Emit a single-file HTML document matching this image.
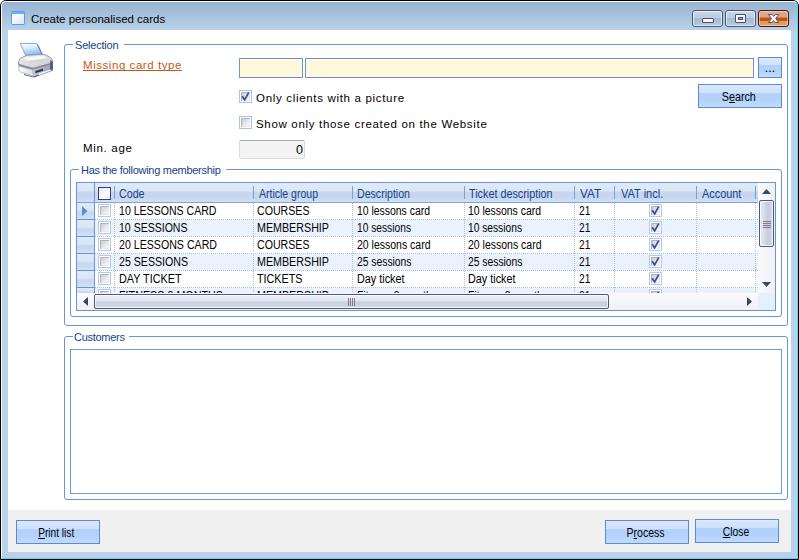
<!DOCTYPE html>
<html><head><meta charset="utf-8">
<style>
*{box-sizing:border-box;margin:0;padding:0}
html,body{width:799px;height:560px;overflow:hidden;background:#fff}
body{font-family:"Liberation Sans",sans-serif;font-size:11px;color:#000;position:relative}
.abs{position:absolute}
#win{position:absolute;left:0;top:0;width:799px;height:560px;background:#b9d1ea;border:1px solid #000;border-radius:6px 6px 0 0;overflow:hidden}
#tb{position:absolute;left:0;top:0;width:797px;height:29px;background:linear-gradient(#99b4d1 0%,#99b4d1 6%,#b9d1ea 100%)}
#hl{position:absolute;left:0;top:0;width:797px;height:558px;border:1px solid #fdfeff;border-right-color:#5bd5f7;border-bottom-color:#5bd5f7;border-radius:5px 5px 0 0}
#content{position:absolute;left:7px;top:29px;width:783px;height:522px;background:#fff}
#foot{position:absolute;left:0;top:480px;width:783px;height:42px;background:#f0f0f0}
.title{position:absolute;left:30px;top:12px;font-size:11.5px;color:#000;white-space:nowrap}
.gb{position:absolute;border:1px solid #6695d8;border-radius:3px}
.gbc{position:absolute;background:#fff;color:#15428b;font-size:11px;letter-spacing:-.28px;padding:0 0 0 2px;white-space:nowrap;line-height:13px}
.t{position:absolute;white-space:nowrap;line-height:13px}
.v{font-size:11.5px;letter-spacing:.68px}
.btn{position:absolute;border:1px solid #5b8bd6;background:linear-gradient(#e2edfd 0%,#d8e6fc 6%,#cfe1fc 36%,#b2d1fb 38%,#b4d3fb 70%,#c2dbfc 100%);text-align:center;font-size:12.5px;line-height:24px;padding-right:3px;white-space:nowrap}
.btn span{display:inline-block;transform-origin:50% 50%}
.in{position:absolute;border:1px solid #6795d8;background:#fff8dc}
.cb{position:absolute;width:13px;height:13px;border:1px solid #a9c4ea;background:linear-gradient(135deg,#bcc1c8,#f4f5f6 75%);box-shadow:inset 0 0 0 1px #fff,inset 2px 2px 0 0 #b0b6be,inset -2px -2px 0 0 #e6e8eb}
.cb svg{position:absolute;left:-1px;top:-1px}

.gh{position:absolute;background:linear-gradient(#e1eaf7 0%,#dbe6f5 42%,#c5d6ee 48%,#c5d6ee 72%,#d2e0f3 100%)}
.ind{position:absolute;background:linear-gradient(#dfe9f7 0%,#dbe6f5 45%,#c8d8ef 55%,#c8d8ef 70%,#d5e2f4 100%)}
.hd{position:absolute;height:1px;background:repeating-linear-gradient(90deg,#a9c0e6 0 1px,transparent 1px 2px)}
.vd{position:absolute;width:1px;background:repeating-linear-gradient(180deg,#a9c0e6 0 1px,transparent 1px 2px)}
.ht{color:#15428b;font-size:12.5px;transform-origin:0 50%;line-height:15px}
.rt{font-size:12.5px;transform-origin:0 50%;line-height:15px}
.rcb{position:absolute;width:13px;height:13px;border:1px solid #b5c9e8;background:linear-gradient(135deg,#bcc1c8,#f4f5f6 75%);box-shadow:inset 0 0 0 1px #fff,inset 2px 2px 0 0 #b0b6be,inset -2px -2px 0 0 #e6e8eb}
.rcb svg{position:absolute;left:-1px;top:-1px}

.cbtn{position:absolute;border:1px solid #4a5578;border-radius:3px;background:linear-gradient(#c9d8ea 0%,#bccde3 45%,#a5bcd8 50%,#b3c8e0 100%);box-shadow:inset 0 0 0 1px rgba(255,255,255,.65)}
.cbtn i{position:absolute;border:1px solid #4a4f73;background:#f4f6fa;border-radius:1px}
.cbtn b{position:absolute;border:1px solid #4a4f73;background:#8fb0dc}
.cbtn.cx{border-color:#4b1220;background:linear-gradient(#e0ab90 0%,#dba388 42%,#c5500f 45%,#c5500f 65%,#d99a5e 68%,#dba868 100%);box-shadow:inset 0 0 0 1px rgba(255,225,200,.6)}
</style></head><body>
<div id="win">
 <div id="tb"></div>
 <div id="hl"></div>
 <div class="title">Create personalised cards</div>
 <div id="content">
  <div id="foot"></div>
 </div>
</div>

<div id="L" style="position:absolute;left:0;top:0;width:799px;height:560px">

 <!-- title icon -->
 <svg class="abs" style="left:11px;top:11px" width="14" height="14" viewBox="0 0 15 15">
  <defs><linearGradient id="wi" x1="0" y1="0" x2="1" y2="1"><stop offset="0" stop-color="#ffffff"/><stop offset=".5" stop-color="#f2f6fd"/><stop offset="1" stop-color="#d4e3fa"/></linearGradient></defs>
  <rect x=".5" y=".5" width="14" height="14" rx="1.2" fill="url(#wi)" stroke="#4398ea"/>
  <rect x="1" y="1" width="13" height="2.2" fill="#69b0f3"/>
 </svg>
 <!-- caption buttons -->
 <div class="cbtn" style="left:692px;top:10px;width:31px;height:17px"><i style="left:9px;top:7px;width:12px;height:5px"></i></div>
 <div class="cbtn" style="left:725px;top:10px;width:31px;height:17px"><i style="left:9px;top:3px;width:11px;height:9px"></i><b style="left:12px;top:6px;width:5px;height:3px"></b></div>
 <div class="cbtn cx" style="left:758px;top:10px;width:31px;height:17px">
  <svg class="abs" style="left:8px;top:2px" width="14" height="11" viewBox="0 0 14 11"><path transform="translate(0.3 0) scale(0.9 1)" d="M1.2 1.5 L5.2 1.5 L7 3.4 L8.8 1.5 L12.8 1.5 L9.2 5.5 L12.8 9.5 L8.8 9.5 L7 7.6 L5.2 9.5 L1.2 9.5 L4.8 5.5 Z" fill="#fff" stroke="#4a4f73" stroke-width="1" stroke-linejoin="round"/></svg>
 </div>
 <!-- printer icon -->
 <svg class="abs" style="left:12px;top:38px" width="48" height="42" viewBox="12 38 48 42">
  <defs>
   <linearGradient id="pp" x1="0" y1="0" x2=".35" y2="1"><stop offset="0" stop-color="#ffffff"/><stop offset=".4" stop-color="#e3effd"/><stop offset="1" stop-color="#86bef6"/></linearGradient>
   <linearGradient id="pt" x1="0" y1="0" x2="1" y2="1"><stop offset="0" stop-color="#eff0ef"/><stop offset="1" stop-color="#c9cccc"/></linearGradient>
   <linearGradient id="pl" x1="0" y1="0" x2="1" y2="0"><stop offset="0" stop-color="#fbfbfb"/><stop offset="1" stop-color="#dcdfdf"/></linearGradient>
   <linearGradient id="pr" x1="0" y1="0" x2="1" y2="0"><stop offset="0" stop-color="#c3c7c4"/><stop offset="1" stop-color="#989db0"/></linearGradient>
  </defs>
  <!-- shadow -->
  <path d="M24 74 L33 76.6 L47 71 L52.8 66 L52.8 70.4 L34 77.6 L24 75 Z" fill="#2f3a68" opacity=".85"/>
  <!-- paper -->
  <path d="M20.3 43.4 L36.6 43.4 L41.8 54.2 L25.6 55.4 Z" fill="url(#pp)" stroke="#7f8aa8" stroke-width=".8"/>
  <path d="M36.8 43.6 L41.8 54 L43.4 55.4 L38.4 45 Z" fill="#4d567e" opacity=".8"/>
  <!-- body top -->
  <path d="M18.6 61.5 Q18.6 58.5 23.5 56.6 L27 55.4 L42 54.2 L46.5 55.2 Q52.6 58.2 52.6 61.2 L52.6 63 L33 68.4 L18.6 64.5 Z" fill="url(#pt)" stroke="#8f93a2" stroke-width=".9"/>
  <path d="M23.5 57.8 L44 55.8 L47.5 58.2 L29 60.8 Z" fill="#fbfcfc" opacity=".9"/>
  <path d="M29 60.8 L47.5 58.2 L49 60 L31 63 Z" fill="#d4d7d6" opacity=".9"/>
  <!-- mid stripe -->
  <path d="M18.6 64 L33 68 L52.6 62.6 L52.6 64.8 L33 70.2 L18.6 66.2 Z" fill="#857d96" opacity=".85"/>
  <!-- left face -->
  <path d="M18.8 66 L33 70 L33 76 L20.5 72 Q18.8 71 18.8 69.5 Z" fill="url(#pl)" stroke="#9599a8" stroke-width=".6"/>
  <!-- right face -->
  <path d="M33 70 L52.6 64.6 L52.6 68.5 Q52.6 69.8 51 70.5 L33 76 Z" fill="url(#pr)"/>
  <path d="M50.2 60 L52.8 62 L52.8 69 L50.2 70.6 Z" fill="#3f4b7c" opacity=".9"/>
  <!-- slot -->
  <path d="M35.3 71 L43 68.6 L43 70.8 L35.3 73.2 Z" fill="#273363"/>
  <!-- out tray -->
  <path d="M37.5 73.4 L49.8 69.2 L51.4 70.8 L39.5 75.2 Z" fill="#f5f7f9" stroke="#8d93aa" stroke-width=".5"/>
 </svg>

 <!-- Selection groupbox -->
 <div class="gb" style="left:64px;top:44px;width:724px;height:282px"></div>
 <div class="gbc" style="left:73px;top:39px;width:51px;padding-left:2px;letter-spacing:-.2px">Selection</div>

 <div class="t v" style="left:83px;top:59px;height:12px;overflow:hidden;color:#c4571a;text-decoration:underline;text-decoration-skip-ink:none;letter-spacing:.55px">Missing card type</div>
 <div class="in" style="left:239px;top:58px;width:64px;height:20px"></div>
 <div class="in" style="left:305px;top:58px;width:449px;height:20px"></div>
 <div class="btn" style="left:758px;top:57px;width:24px;height:21px;line-height:21px;padding-right:0;letter-spacing:0">...</div>

 <div class="cb" style="left:239px;top:90px"><svg width="13" height="13" viewBox="0 0 13 13"><path d="M3.2 6.3 L5.6 9.8 L9.7 2.6" fill="none" stroke="#3a4a9c" stroke-width="1.7"/></svg></div>
 <div class="t v" style="left:256px;top:92px">Only clients with a picture</div>
 <div class="btn" style="left:698px;top:84px;width:84px;height:24px"><span style="transform:scaleX(.858)">S<u>e</u>arch</span></div>

 <div class="cb" style="left:239px;top:116px"></div>
 <div class="t v" style="left:256px;top:118px">Show only those created on the Website</div>

 <div class="t v" style="left:83px;top:142px">Min. age</div>
 <div class="abs" style="left:239px;top:140px;width:66px;height:19px;border:1px solid #d3dde9;border-top-color:#a5adad;border-radius:2px;background:#f4f4f4;text-align:right;padding-right:1px;line-height:18px;font-size:12.5px;transform-origin:100% 50%">0</div>

 <!-- membership groupbox -->
 <div class="gb" style="left:70px;top:169px;width:712px;height:148px"></div>
 <div class="gbc" style="left:79px;top:164px;width:147px">Has the following membership</div>

 <div id="grid" class="abs" style="left:76px;top:182px;width:700px;height:129px;border:1px solid #6695d8;background:#fff;overflow:hidden">
  <div class="gh" style="left:0;top:0;width:681px;height:19px"></div>
  <div class="abs" style="left:0;top:19px;width:681px;height:1px;background:#7fa3dc"></div>
  <div class="abs" style="left:17px;top:0;width:1px;height:110px;background:#6695d8"></div>
  <div class="ind" style="left:0;top:20px;width:17px;height:16px"></div>
  <div class="abs" style="left:0;top:36px;width:17px;height:1px;background:#6695d8"></div>
  <div class="ind" style="left:0;top:37px;width:17px;height:16px"></div>
  <div class="abs" style="left:0;top:53px;width:17px;height:1px;background:#6695d8"></div>
  <div class="ind" style="left:0;top:54px;width:17px;height:16px"></div>
  <div class="abs" style="left:0;top:70px;width:17px;height:1px;background:#6695d8"></div>
  <div class="ind" style="left:0;top:71px;width:17px;height:16px"></div>
  <div class="abs" style="left:0;top:87px;width:17px;height:1px;background:#6695d8"></div>
  <div class="ind" style="left:0;top:88px;width:17px;height:16px"></div>
  <div class="abs" style="left:0;top:104px;width:17px;height:1px;background:#6695d8"></div>
  <div class="ind" style="left:0;top:105px;width:17px;height:6px"></div>
  <div class="abs" style="left:18px;top:37px;width:663px;height:16px;background:#eaf2fd"></div>
  <div class="abs" style="left:18px;top:71px;width:663px;height:16px;background:#eaf2fd"></div>
  <div class="abs" style="left:18px;top:105px;width:663px;height:16px;background:#eaf2fd"></div>
  <div class="hd" style="left:18px;top:36px;width:663px"></div>
  <div class="hd" style="left:18px;top:53px;width:663px"></div>
  <div class="hd" style="left:18px;top:70px;width:663px"></div>
  <div class="hd" style="left:18px;top:87px;width:663px"></div>
  <div class="hd" style="left:18px;top:104px;width:663px"></div>
  <div class="vd" style="left:37px;top:20px;height:90px"></div>
  <div class="abs" style="left:37px;top:3px;width:1px;height:13px;background:#7da0d8"></div>
  <div class="vd" style="left:176px;top:20px;height:90px"></div>
  <div class="abs" style="left:176px;top:3px;width:1px;height:13px;background:#7da0d8"></div>
  <div class="vd" style="left:275px;top:20px;height:90px"></div>
  <div class="abs" style="left:275px;top:3px;width:1px;height:13px;background:#7da0d8"></div>
  <div class="vd" style="left:387px;top:20px;height:90px"></div>
  <div class="abs" style="left:387px;top:3px;width:1px;height:13px;background:#7da0d8"></div>
  <div class="vd" style="left:497px;top:20px;height:90px"></div>
  <div class="abs" style="left:497px;top:3px;width:1px;height:13px;background:#7da0d8"></div>
  <div class="vd" style="left:537px;top:20px;height:90px"></div>
  <div class="abs" style="left:537px;top:3px;width:1px;height:13px;background:#7da0d8"></div>
  <div class="vd" style="left:619px;top:20px;height:90px"></div>
  <div class="abs" style="left:619px;top:3px;width:1px;height:13px;background:#7da0d8"></div>
  <div class="vd" style="left:678px;top:20px;height:90px"></div>
  <div class="abs" style="left:678px;top:3px;width:1px;height:13px;background:#7da0d8"></div>
  <div class="abs" style="left:21px;top:4px;width:13px;height:13px;border:1px solid #353b85;background:linear-gradient(135deg,#dfe6f2,#fdfdfe 60%,#e9eef6)"></div>
  <div class="t ht" style="left:41.599999999999994px;top:4.0px;transform:scaleX(0.8531)">Code</div>
  <div class="t ht" style="left:181.5px;top:4.0px;transform:scaleX(0.8406)">Article group</div>
  <div class="t ht" style="left:280px;top:4.0px;transform:scaleX(0.8476)">Description</div>
  <div class="t ht" style="left:392px;top:4.0px;transform:scaleX(0.8636)">Ticket description</div>
  <div class="t ht" style="left:503px;top:4.0px;transform:scaleX(0.939)">VAT</div>
  <div class="t ht" style="left:543.8px;top:4.0px;transform:scaleX(0.8803)">VAT incl.</div>
  <div class="t ht" style="left:625px;top:4.0px;transform:scaleX(0.87)">Account</div>
  <svg class="abs" style="left:5px;top:23px" width="6" height="10" viewBox="0 0 6 10"><path d="M0 0 L5.5 5 L0 10 Z" fill="#5b8bd5"/></svg>
  <div class="rcb" style="left:21px;top:21px"></div>
  <div class="rcb" style="left:572px;top:21px"><svg width="13" height="13" viewBox="0 0 13 13"><path d="M3.2 6.3 L5.6 9.8 L9.7 2.6" fill="none" stroke="#3a4a9c" stroke-width="1.7"/></svg></div>
  <div class="t rt" style="left:41.599999999999994px;top:21.0px;transform:scaleX(0.8454)">10 LESSONS CARD</div>
  <div class="t rt" style="left:180.3px;top:21.0px;transform:scaleX(0.8491)">COURSES</div>
  <div class="t rt" style="left:279.6px;top:21.0px;transform:scaleX(0.8337)">10 lessons card</div>
  <div class="t rt" style="left:390.6px;top:21.0px;transform:scaleX(0.8337)">10 lessons card</div>
  <div class="t rt" style="left:502.29999999999995px;top:21.0px;transform:scaleX(0.8124)">21</div>
  <div class="rcb" style="left:21px;top:38px"></div>
  <div class="rcb" style="left:572px;top:38px"><svg width="13" height="13" viewBox="0 0 13 13"><path d="M3.2 6.3 L5.6 9.8 L9.7 2.6" fill="none" stroke="#3a4a9c" stroke-width="1.7"/></svg></div>
  <div class="t rt" style="left:41.599999999999994px;top:38.0px;transform:scaleX(0.8426)">10 SESSIONS</div>
  <div class="t rt" style="left:180.3px;top:38.0px;transform:scaleX(0.8566)">MEMBERSHIP</div>
  <div class="t rt" style="left:279.6px;top:38.0px;transform:scaleX(0.8179)">10 sessions</div>
  <div class="t rt" style="left:390.6px;top:38.0px;transform:scaleX(0.8179)">10 sessions</div>
  <div class="t rt" style="left:502.29999999999995px;top:38.0px;transform:scaleX(0.8124)">21</div>
  <div class="rcb" style="left:21px;top:55px"></div>
  <div class="rcb" style="left:572px;top:55px"><svg width="13" height="13" viewBox="0 0 13 13"><path d="M3.2 6.3 L5.6 9.8 L9.7 2.6" fill="none" stroke="#3a4a9c" stroke-width="1.7"/></svg></div>
  <div class="t rt" style="left:41.599999999999994px;top:55.0px;transform:scaleX(0.8497)">20 LESSONS CARD</div>
  <div class="t rt" style="left:180.3px;top:55.0px;transform:scaleX(0.8491)">COURSES</div>
  <div class="t rt" style="left:279.6px;top:55.0px;transform:scaleX(0.8394)">20 lessons card</div>
  <div class="t rt" style="left:390.6px;top:55.0px;transform:scaleX(0.8394)">20 lessons card</div>
  <div class="t rt" style="left:502.29999999999995px;top:55.0px;transform:scaleX(0.8124)">21</div>
  <div class="rcb" style="left:21px;top:72px"></div>
  <div class="rcb" style="left:572px;top:72px"><svg width="13" height="13" viewBox="0 0 13 13"><path d="M3.2 6.3 L5.6 9.8 L9.7 2.6" fill="none" stroke="#3a4a9c" stroke-width="1.7"/></svg></div>
  <div class="t rt" style="left:41.599999999999994px;top:72.0px;transform:scaleX(0.8487)">25 SESSIONS</div>
  <div class="t rt" style="left:180.3px;top:72.0px;transform:scaleX(0.8566)">MEMBERSHIP</div>
  <div class="t rt" style="left:279.6px;top:72.0px;transform:scaleX(0.8255)">25 sessions</div>
  <div class="t rt" style="left:390.6px;top:72.0px;transform:scaleX(0.8255)">25 sessions</div>
  <div class="t rt" style="left:502.29999999999995px;top:72.0px;transform:scaleX(0.8124)">21</div>
  <div class="rcb" style="left:21px;top:89px"></div>
  <div class="rcb" style="left:572px;top:89px"><svg width="13" height="13" viewBox="0 0 13 13"><path d="M3.2 6.3 L5.6 9.8 L9.7 2.6" fill="none" stroke="#3a4a9c" stroke-width="1.7"/></svg></div>
  <div class="t rt" style="left:41.599999999999994px;top:89.0px;transform:scaleX(0.8651)">DAY TICKET</div>
  <div class="t rt" style="left:180.3px;top:89.0px;transform:scaleX(0.8617)">TICKETS</div>
  <div class="t rt" style="left:279.6px;top:89.0px;transform:scaleX(0.8654)">Day ticket</div>
  <div class="t rt" style="left:390.6px;top:89.0px;transform:scaleX(0.8654)">Day ticket</div>
  <div class="t rt" style="left:502.29999999999995px;top:89.0px;transform:scaleX(0.8124)">21</div>
  <div class="rcb" style="left:21px;top:106px"></div>
  <div class="rcb" style="left:572px;top:106px"><svg width="13" height="13" viewBox="0 0 13 13"><path d="M3.2 6.3 L5.6 9.8 L9.7 2.6" fill="none" stroke="#3a4a9c" stroke-width="1.7"/></svg></div>
  <div class="t rt" style="left:41.599999999999994px;top:106.0px;transform:scaleX(0.8606)">FITNESS 3 MONTHS</div>
  <div class="t rt" style="left:180.3px;top:106.0px;transform:scaleX(0.8566)">MEMBERSHIP</div>
  <div class="t rt" style="left:279.6px;top:106.0px;transform:scaleX(0.8404)">Fitness 3 months</div>
  <div class="t rt" style="left:390.6px;top:106.0px;transform:scaleX(0.8404)">Fitness 3 months</div>
  <div class="t rt" style="left:502.29999999999995px;top:106.0px;transform:scaleX(0.8124)">21</div>
  <div class="abs" style="left:681px;top:0;width:17px;height:110px;background:linear-gradient(90deg,#fafbfc,#eef0f4)"></div>
  <svg class="abs" style="left:685px;top:6px" width="9" height="5" viewBox="0 0 9 5"><path d="M0 5 L4.5 0 L9 5 Z" fill="#3a4568"/></svg>
  <svg class="abs" style="left:685px;top:99px" width="9" height="5" viewBox="0 0 9 5"><path d="M0 0 L4.5 5 L9 0 Z" fill="#3a4568"/></svg>
  <div class="abs" style="left:682px;top:17px;width:15px;height:47px;border:1px solid #4b5984;border-radius:2px;background:linear-gradient(90deg,#e8ecf3 0%,#d3d9e6 40%,#c3cbdc 60%,#d6dbe7 100%);box-shadow:inset 0 0 0 1px rgba(255,255,255,.7)"></div>
  <div class="abs" style="left:686px;top:38px;width:8px;height:1px;background:#84748f"></div>
  <div class="abs" style="left:686px;top:40px;width:8px;height:1px;background:#84748f"></div>
  <div class="abs" style="left:686px;top:42px;width:8px;height:1px;background:#84748f"></div>
  <div class="abs" style="left:686px;top:44px;width:8px;height:1px;background:#84748f"></div>
  <div class="abs" style="left:0;top:110px;width:681px;height:17px;background:linear-gradient(#fafbfc,#eef0f4)"></div>
  <div class="abs" style="left:681px;top:110px;width:17px;height:17px;background:#e6effc"></div>
  <svg class="abs" style="left:6px;top:114px" width="5" height="9" viewBox="0 0 5 9"><path d="M5 0 L0 4.5 L5 9 Z" fill="#3a4568"/></svg>
  <svg class="abs" style="left:670px;top:114px" width="5" height="9" viewBox="0 0 5 9"><path d="M0 0 L5 4.5 L0 9 Z" fill="#3a4568"/></svg>
  <div class="abs" style="left:17px;top:111px;width:515px;height:15px;border:1px solid #4b5984;border-radius:2px;background:linear-gradient(#eef1f6 0%,#e1e5ee 45%,#cad1e1 52%,#ccd3e2 85%,#dbe0ea 100%);box-shadow:inset 0 0 0 1px rgba(255,255,255,.7)"></div>
  <div class="abs" style="left:271px;top:115px;width:1px;height:8px;background:#84748f"></div>
  <div class="abs" style="left:273px;top:115px;width:1px;height:8px;background:#84748f"></div>
  <div class="abs" style="left:275px;top:115px;width:1px;height:8px;background:#84748f"></div>
  <div class="abs" style="left:277px;top:115px;width:1px;height:8px;background:#84748f"></div>
 </div>

 <!-- Customers -->
 <div class="gb" style="left:64px;top:336px;width:724px;height:164px"></div>
 <div class="gbc" style="left:73px;top:331px;width:56px;padding-left:1px">Customers</div>
 <div class="abs" style="left:70px;top:349px;width:712px;height:145px;border:1px solid #6f9bd8;background:#fff"></div>

 <!-- buttons -->
 <div class="btn" style="left:16px;top:520px;width:84px;height:24px"><span style="transform:scaleX(.81)"><u>P</u>rint list</span></div>
 <div class="btn" style="left:605px;top:520px;width:84px;height:24px"><span style="transform:scaleX(.841)">P<u>r</u>ocess</span></div>
 <div class="btn" style="left:695px;top:519px;width:84px;height:24px"><span style="transform:scaleX(.826)"><u>C</u>lose</span></div>
</div>
</body></html>
